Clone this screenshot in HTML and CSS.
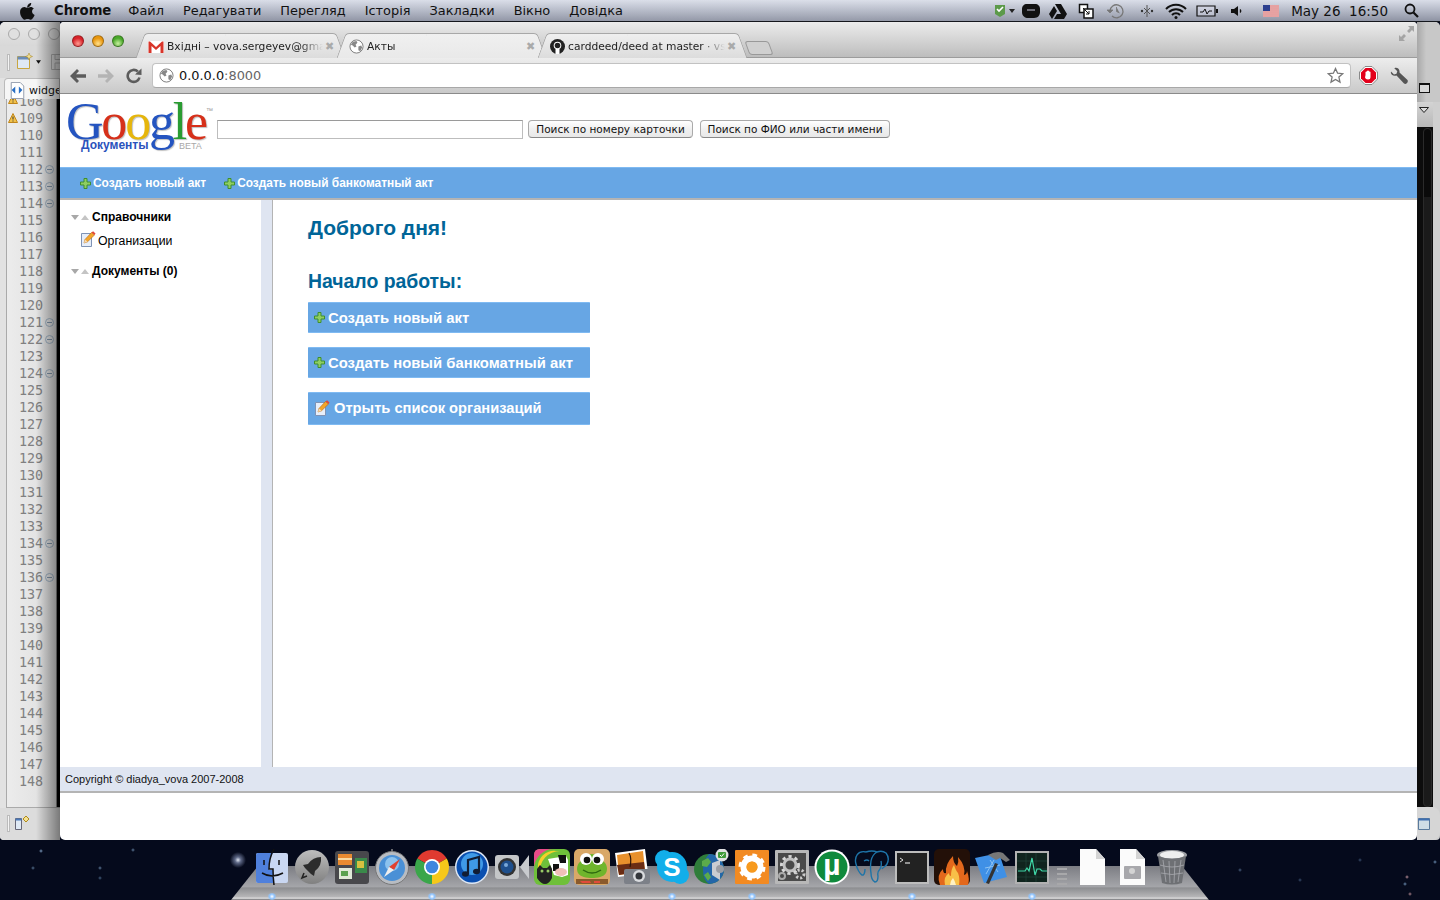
FILE: index.html
```html
<!DOCTYPE html>
<html lang="en">
<head>
    <meta charset="UTF-8">
    <meta name="viewport" content="width=device-width, initial-scale=1.0">
    <title>Акты</title>
    <link rel="stylesheet" href="styles.css">
</head>
<body>
    <!-- shared icons -->
    <svg class="defs">
        <symbol id="plus" viewBox="0 0 11 11"><path d="M4 .5h3V4h3.500v3H7v3.500H4V7H.5V4H4z" fill="#8fce62" stroke="#3f8f2c"/></symbol>
        <symbol id="pencil" viewBox="0 0 16 16"><path d="M1.500 2.500h10v13h-10z" fill="#e6eefa" stroke="#7f93b5"/><path d="M4 12l1-3.500L11.500 1.500l3 2.500-7 6.800z" fill="#f4a52a" stroke="#b86a10" stroke-width=".6"/><path d="M11.500 1.500l3 2.500 1-1.500-2.400-2.200z" fill="#e2483a"/><path d="M4 12l1-3.500 2.500 2.300z" fill="#f6dcb4"/></symbol>
        <symbol id="globe" viewBox="0 0 16 16"><circle cx="8" cy="8" r="7" fill="#fff" stroke="#777"/><path d="M4 3l4-1 1 2-2 2 1 2-2 1-2-2-2-1zM10 8l3-1 1 2-2 4-2-1z" fill="#888"/></symbol>
        <symbol id="twist" viewBox="0 0 18 5"><path d="M0 0h8L4 5z" fill="#a8a8a8"/><path d="M10 5h8L14 0z" fill="#c4c4c4"/></symbol>
        <symbol id="warning" viewBox="0 0 10 10"><path d="M5 .5L9.500 9.500H.5z" fill="#f2c24a" stroke="#c0861c" stroke-linejoin="round"/><path d="M5 3.500v3M5 7.500v1" stroke="#333"/></symbol>
    </svg>

    <div class="desktop">
        <header class="menubar">
            <svg class="apple" viewBox="0 0 15 18"><path d="M11.200 1c.1 1.200-.4 2.300-1.100 3.100-.7.800-1.800 1.400-2.900 1.300-.1-1.100.4-2.300 1.100-3C9 1.600 10.200 1 11.200 1zM14.600 13c-.4 1-.6 1.400-1.100 2.200-.7 1.100-1.700 2.500-3 2.500-1.100 0-1.400-.7-2.900-.7s-1.800.7-3 .7c-1.300 0-2.200-1.300-2.900-2.400C-.2 12.400-.4 8.900.8 7 1.700 5.700 3 4.900 4.300 4.900c1.300 0 2.200.8 3.200.8 1 0 1.600-.8 3.200-.8 1.100 0 2.300.6 3.200 1.700-2.800 1.500-2.300 5.500.7 6.400z" fill="#111"/></svg>
            <nav class="menu">
                <span class="menu-app">Chrome</span>
                <span>Файл</span>
                <span>Редагувати</span>
                <span>Перегляд</span>
                <span>Історія</span>
                <span>Закладки</span>
                <span>Вікно</span>
                <span>Довідка</span>
            </nav>
            <div class="tray">
                <svg class="tray-ico" width="22" height="16" viewBox="0 0 22 16"><path d="M1 2h10v9l-5 3-5-3z" fill="#5c9a4a"/><path d="M3 6l2 2 4-4" stroke="#fff" stroke-width="1.600" fill="none"/><path d="M15 6h6l-3 4z" fill="#222"/></svg>
                <svg class="tray-ico gap-6" width="18" height="16" viewBox="0 0 18 16"><path d="M5 1h8c3 0 5 2 5 5v3c0 3-2 6-6 6H6c-3 0-6-2-6-6V6c0-3 2-5 5-5z" fill="#111"/><path d="M5 7h8" stroke="#aab" stroke-width="1.200"/></svg>
                <svg class="tray-ico" width="18" height="16" viewBox="0 0 18 16"><path d="M6 1h6l6 10h-6zM5 3l3 5-5 8-3-5zM8 11h10l-3 5H5z" fill="#111"/></svg>
                <svg class="tray-ico gap-11" width="16" height="16" viewBox="0 0 16 16"><path d="M1.500 1.500h8v8h-8z" fill="#fff" stroke="#111" stroke-width="1.500"/><path d="M6 6h9v9H6z" fill="#fff" stroke="#111" stroke-width="1.500"/><path d="M5 5l6 6M8 11h3V8" stroke="#111" fill="none"/></svg>
                <svg class="tray-ico gap-13" width="18" height="16" viewBox="0 0 18 16"><path d="M3 8a6.500 6.500 0 1 1 2 5" fill="none" stroke="#777" stroke-width="1.300"/><path d="M0 7h6L3 10z M9.500 4v4.500l3 1.500" fill="#777" stroke="#777" stroke-width=".8"/></svg>
                <svg class="tray-ico gap-15" width="14" height="16" viewBox="0 0 14 16"><path d="M7 2v12M4 5l6 6M10 5l-6 6" stroke="#555" stroke-width="1" fill="none"/><circle cx="2" cy="8" r="1.200" fill="#333"/><circle cx="12" cy="8" r="1.200" fill="#333"/></svg>
                <svg class="tray-ico gap-11" width="22" height="16" viewBox="0 0 22 16"><path d="M1 6a14 14 0 0 1 20 0M4 9a10 10 0 0 1 14 0M7 12a5.500 5.500 0 0 1 8 0" stroke="#111" stroke-width="2" fill="none"/><circle cx="11" cy="14.500" r="1.500" fill="#111"/></svg>
                <svg class="tray-ico" width="22" height="14" viewBox="0 0 22 14"><path d="M1 2h18v10H1z" fill="#eef" fill-opacity=".3" stroke="#111" stroke-width="1.200"/><path d="M20 5h2v4h-2z" fill="#111"/><path d="M4 8h3l2-3 2 5 2-3h3" stroke="#111" fill="none"/></svg>
                <svg class="tray-ico gap-13" width="12" height="14" viewBox="0 0 12 14"><path d="M0 5h3l4-3v10L3 9H0z" fill="#111"/><path d="M9 5.500q1.500 1.500 0 3" stroke="#111" fill="none" stroke-width="1.200"/></svg>
                <svg class="tray-ico gap-20" width="16" height="12" viewBox="0 0 16 12"><path d="M0 0h16v12H0z" fill="#fff"/><path d="M0 1h16M0 3h16M0 5h16M0 7h16M0 9h16M0 11h16" stroke="#c44" stroke-width="1"/><path d="M0 0h7v6H0z" fill="#2c3f8f"/></svg>
                <span class="clock">May 26&nbsp; 16:50</span>
                <svg class="tray-ico" width="15" height="15" viewBox="0 0 15 15"><circle cx="6" cy="6" r="4.500" fill="none" stroke="#111" stroke-width="1.800"/><path d="M9.500 9.500l4.500 4.500" stroke="#111" stroke-width="2.200"/></svg>
            </div>
        </header>

        <!-- editor window behind the browser -->
        <div class="back-window">
            <div class="back-left">
                <div class="back-title">
                    <i class="dim-dot"></i><i class="dim-dot"></i><i class="dim-dot"></i>
                </div>
                <div class="back-tools">
                    <i class="grip"></i>
                    <svg width="18" height="18" viewBox="0 0 18 18"><path d="M1.500 3.500h12v12h-12z" fill="#dfe9f5" stroke="#c9a640"/><path d="M1.500 3.500h12v3h-12z" fill="#6a8cb8"/><path d="M13 0l1 2.500 2.500 1-2.500 1-1 2.500-1-2.500-2.500-1 2.500-1z" fill="#f4e090" stroke="#a08020" stroke-width=".5"/></svg>
                    <svg width="5" height="4" viewBox="0 0 7 5"><path d="M0 0h7L3.500 5z" fill="#111"/></svg>
                    <svg class="floppy" width="16" height="16" viewBox="0 0 16 16"><path d="M.5.5h15v15H.5zM4 .5v5h8v-5M4 15v-6h8v6" fill="none" stroke="#aaa"/></svg>
                </div>
                <div class="back-tab">
                    <svg width="17" height="17" viewBox="0 0 17 19"><path d="M1.500.5h10l4 4v14h-14z" fill="#fff" stroke="#8a94a6"/><path d="M6 5L2 9l4 4zM10 5l4 4-4 4z" fill="#2a6fc4"/></svg>
                    <span>widget.py</span>
                </div>
                <div class="gutter">
                    <div class="line">108<svg class="warn warn-cut"><use href="#warning"/></svg></div>
                    <div class="line">109<svg class="warn"><use href="#warning"/></svg></div>
                    <div class="line">110</div>
                    <div class="line">111</div>
                    <div class="line">112<i class="fold"></i></div>
                    <div class="line">113<i class="fold"></i></div>
                    <div class="line">114<i class="fold"></i></div>
                    <div class="line">115</div>
                    <div class="line">116</div>
                    <div class="line">117</div>
                    <div class="line">118</div>
                    <div class="line">119</div>
                    <div class="line">120</div>
                    <div class="line">121<i class="fold"></i></div>
                    <div class="line">122<i class="fold"></i></div>
                    <div class="line">123</div>
                    <div class="line">124<i class="fold"></i></div>
                    <div class="line">125</div>
                    <div class="line">126</div>
                    <div class="line">127</div>
                    <div class="line">128</div>
                    <div class="line">129</div>
                    <div class="line">130</div>
                    <div class="line">131</div>
                    <div class="line">132</div>
                    <div class="line">133</div>
                    <div class="line">134<i class="fold"></i></div>
                    <div class="line">135</div>
                    <div class="line">136<i class="fold"></i></div>
                    <div class="line">137</div>
                    <div class="line">138</div>
                    <div class="line">139</div>
                    <div class="line">140</div>
                    <div class="line">141</div>
                    <div class="line">142</div>
                    <div class="line">143</div>
                    <div class="line">144</div>
                    <div class="line">145</div>
                    <div class="line">146</div>
                    <div class="line">147</div>
                    <div class="line">148</div>
                </div>
                <div class="back-status">
                    <i class="grip"></i>
                    <svg width="16" height="16" viewBox="0 0 16 16"><path d="M.5 3.500h6v11h-6z" fill="#dfe9f5" stroke="#667"/><path d="M.5 3.500h6v2h-6z" fill="#4a78b8"/><path d="M11 1l3 3-3 3-3-3z" fill="#f4e090" stroke="#b08a18"/></svg>
                </div>
            </div>
            <div class="back-right">
                <div class="side-icon"><i class="restore"></i></div>
                <div class="side-drop"><svg width="10" height="6" viewBox="0 0 10 6"><path d="M.5.5h9L5 5.500z" fill="#ddd" stroke="#222"/></svg></div>
                <div class="side-dark"><i class="scroll-track"></i></div>
                <div class="side-bottom">
                    <svg width="12" height="12" viewBox="0 0 12 12"><path d="M.5.500h11v11H.5z" fill="#cfdde6" stroke="#5a7a9c"/><path d="M.5.500h11v2H.5z" fill="#3f6fb0"/></svg>
                </div>
            </div>
        </div>

        <!-- browser window -->
        <div class="browser">
            <div class="tabstrip">
                <div class="lights">
                    <i class="light light-red"></i><i class="light light-amber"></i><i class="light light-green"></i>
                </div>
                <div class="tabs">
                    <div class="tab">
                        <svg class="favicon" width="16" height="12" viewBox="0 0 16 12"><path d="M0 0h16v12H0z" fill="#fff"/><path d="M.5 12V.5h1.500L8 6l6-5.500h1.500V12h-3V5L8 9 3.500 5v7z" fill="#d8352a"/></svg>
                        <span class="tab-title">Вхідні – vova.sergeyev@gmail.com</span>
                        <span class="tab-close">✖</span>
                    </div>
                    <div class="tab tab-active">
                        <svg class="favicon" width="15" height="15"><use href="#globe"/></svg>
                        <span class="tab-title">Акты</span>
                        <span class="tab-close">✖</span>
                    </div>
                    <div class="tab">
                        <svg class="favicon" width="15" height="15" viewBox="0 0 15 15"><circle cx="7.500" cy="7.500" r="7.500" fill="#222"/><circle cx="7.500" cy="6.500" r="3.800" fill="#fff"/><path d="M5.500 10h4v5h-4z" fill="#fff"/><circle cx="7.500" cy="6.500" r="2.800" fill="#222"/></svg>
                        <span class="tab-title">carddeed/deed at master · vsergeyev</span>
                        <span class="tab-close">✖</span>
                    </div>
                    <div class="newtab"></div>
                </div>
                <svg class="fullscreen" width="15" height="15" viewBox="0 0 15 15"><path d="M9 0h6v6l-2-2-3 3-2-2 3-3zM6 15H0V9l2 2 3-3 2 2-3 3z" fill="#a4a4a4"/></svg>
            </div>

            <div class="toolbar">
                <svg class="tool" width="16" height="14" viewBox="0 0 16 14"><path d="M7 0l2 2-3 3.200h10v3.600H6L9 12l-2 2-7-7z" fill="#5c5c5c"/></svg>
                <svg class="tool" width="16" height="14" viewBox="0 0 16 14"><path d="M9 0L7 2l3 3.200H0v3.600h10L7 12l2 2 7-7z" fill="#b4b4b4"/></svg>
                <svg class="tool" width="16" height="16" viewBox="0 0 16 16"><path d="M13.500 9.500A6 6 0 1 1 11.800 3.500" fill="none" stroke="#5c5c5c" stroke-width="2.600"/><path d="M9 6.500L15.500 7V.5z" fill="#5c5c5c"/></svg>
                <div class="omnibox">
                    <svg width="15" height="15"><use href="#globe"/></svg>
                    <span class="url">0.0.0.0<span class="url-port">:8000</span></span>
                    <svg class="star" width="17" height="17" viewBox="0 0 17 17"><path d="M8.500 1.500l2.100 4.700 5.100.5-3.800 3.400 1.100 5-4.500-2.600-4.500 2.600 1.100-5L1.300 6.700l5.100-.5z" fill="#fff" stroke="#777" stroke-width="1.300"/></svg>
                </div>
                <svg class="tool-stop" width="19" height="19" viewBox="0 0 19 19"><path d="M6 .5h7L18.500 6v7L13 18.500H6L.5 13V6z" fill="#fff" stroke="#888"/><path d="M6.500 2h6L17 6.500v6L12.500 17h-6L2 12.500v-6z" fill="#e3001b"/><path d="M6.500 9V6q.7-1 1.200 0V5q.8-1 1.300 0q.8-1 1.300 0v1q.7-.8 1.200 0v5q0 2.500-2.500 2.500T6 11.500z" fill="#fff"/></svg>
                <svg class="tool-wrench" width="18" height="18" viewBox="0 0 18 18"><path d="M1 4.500L4 7.500l2.500-.8.800-2.500L4.300 1.200C7 0 10 2 9.500 5.500l8 7.500q.8 1.500-.5 3t-3 .5L6.500 8.500C3 9.500.2 7.500 1 4.500z" fill="#555"/></svg>
            </div>

            <div class="page">
                <div class="top">
                    <div class="logo">
                        <span class="logo-word"><b class="c-blue">G</b><b class="c-red">o</b><b class="c-yellow">o</b><b class="c-blue">g</b><b class="c-green">l</b><b class="c-red">e</b></span>
                        <span class="logo-tm">™</span>
                        <span class="logo-sub">Документы</span>
                        <span class="logo-beta">BETA</span>
                    </div>
                    <input class="search" type="text">
                    <button class="search-btn btn-card">Поиск по номеру карточки</button>
                    <button class="search-btn btn-name">Поиск по ФИО или части имени</button>
                </div>

                <div class="actions">
                    <a class="action"><svg width="11" height="11"><use href="#plus"/></svg>Создать новый акт</a>
                    <a class="action"><svg width="11" height="11"><use href="#plus"/></svg>Создать новый банкоматный акт</a>
                </div>

                <div class="columns">
                    <aside class="sidebar">
                        <div class="tree-head"><svg width="18" height="5"><use href="#twist"/></svg>Справочники</div>
                        <div class="tree-item"><svg width="16" height="16"><use href="#pencil"/></svg>Организации</div>
                        <div class="tree-head tree-head-2"><svg width="18" height="5"><use href="#twist"/></svg>Документы (0)</div>
                    </aside>
                    <div class="strip"></div>
                    <main class="main">
                        <h1>Доброго дня!</h1>
                        <h2>Начало работы:</h2>
                        <a class="big-btn"><svg width="11" height="11"><use href="#plus"/></svg>Создать новый акт</a>
                        <a class="big-btn"><svg width="11" height="11"><use href="#plus"/></svg>Создать новый банкоматный акт</a>
                        <a class="big-btn big-btn-tall"><svg width="16" height="16"><use href="#pencil"/></svg>Отрыть список организаций</a>
                    </main>
                </div>

                <footer class="footer">Copyright © diadya_vova 2007-2008</footer>
                <div class="page-end"></div>
            </div>
        </div>

        <!-- dock -->
        <div class="dock">
            <svg class="dock-ico" viewBox="0 0 36 36"><rect x="2" y="4" width="32" height="30" rx="2" fill="#c9d7f2"/><path d="M4 4h15q-5 8-4 17h4v13H4q-2 0-2-2V6q0-2 2-2z" fill="#4f80dc"/><path d="M20 0q-5 9-5 20h4q0 8 1 16M8 24q10 6 21 0M10 11v5M25 11v5" fill="none" stroke="#111" stroke-width="1.500"/></svg>
            <svg class="dock-ico" viewBox="0 0 36 36"><defs><linearGradient id="silver" x1="0" y1="0" x2="0" y2="1"><stop offset="0" stop-color="#bdbdbd"/><stop offset="1" stop-color="#808080"/></linearGradient></defs><circle cx="18" cy="18" r="17" fill="url(#silver)"/><path d="M27 8q-8 0-13 7l-5 1 2 3 6 6 3 2 1-5q7-5 6-14z" fill="#2c2c2c"/><path d="M10 24l-2 5 5-2" fill="none" stroke="#222" stroke-width="1.500"/></svg>
            <svg class="dock-ico" viewBox="0 0 36 36"><rect x="1" y="2" width="34" height="33" rx="3" fill="#48484c"/><rect x="4" y="5" width="14" height="11" fill="#e88a30"/><rect x="4" y="9" width="14" height="2" fill="#f8d8a0"/><rect x="5" y="19" width="13" height="11" fill="#dfe8d8"/><rect x="7" y="22" width="7" height="5" fill="#5aa050"/><rect x="21" y="9" width="12" height="15" fill="#3a8a4a"/><rect x="23" y="12" width="7" height="7" fill="#d8c040"/></svg>
            <svg class="dock-ico" viewBox="0 0 36 36"><circle cx="18" cy="19" r="16.500" fill="#b8bcc2" stroke="#777"/><circle cx="18" cy="19" r="13" fill="#4a90d6"/><circle cx="18" cy="15" r="7" fill="#8cc2ee"/><path d="M26 10l-6 11-5-3z" fill="#e04030"/><path d="M10 28l5-10 5 3z" fill="#eee"/><path d="M18 0v3" stroke="#888" stroke-width="1.500"/></svg>
            <svg class="dock-ico" viewBox="0 0 36 36"><path d="M18 18L3.300 9.500A17 17 0 0 1 32.700 9.500Z" fill="#e03a30"/><path d="M18 18L32.700 9.500A17 17 0 0 1 18 35Z" fill="#f6c81a"/><path d="M18 18L18 35A17 17 0 0 1 3.300 9.500Z" fill="#3aa64a"/><circle cx="18" cy="18" r="8" fill="#fff"/><circle cx="18" cy="18" r="6.300" fill="#3f86de"/></svg>
            <svg class="dock-ico" viewBox="0 0 36 36"><circle cx="18" cy="18" r="17" fill="#dfe8f5"/><circle cx="18" cy="18" r="15.500" fill="#0a4fb0"/><circle cx="18" cy="15" r="11" fill="#3f9ae8"/><path d="M14 25V11l11-3v14" fill="none" stroke="#111c33" stroke-width="2.200"/><ellipse cx="11.500" cy="25" rx="3.500" ry="2.800" fill="#111c33"/><ellipse cx="22.500" cy="22.500" rx="3.500" ry="2.800" fill="#111c33"/></svg>
            <svg class="dock-ico" viewBox="0 0 36 36"><rect x="1" y="6" width="24" height="24" rx="3" fill="#c4c6c8"/><circle cx="13" cy="18" r="9" fill="#333"/><circle cx="13" cy="18" r="6.500" fill="#1e4f8c"/><circle cx="12" cy="16" r="2" fill="#7aa8d8"/><path d="M35 6v24L26 18z" fill="#c8cace"/></svg>
            <svg class="dock-ico" viewBox="0 0 36 36"><rect x="0" y="0" width="36" height="36" rx="6" fill="#6fc03a"/><path d="M0 18A20 20 0 0 1 20 0h-14q-6 0-6 6z" fill="#e84a8a"/><path d="M4 20A16 16 0 0 1 22 2l4 0A20 20 0 0 0 6 24z" fill="#f6d02a"/><path d="M14 10l18-3 2 4v15l-6 2-8-2z" fill="#fff"/><path d="M24 6h8v8h-6zM19 15h6v7h-6z" fill="#111"/><ellipse cx="27" cy="23" rx="6" ry="4" fill="#f0c0b8"/><path d="M3 20l3-4 3 3h4l3-3 2 4v9q-3 6-7 6t-8-6z" fill="#222"/><circle cx="8" cy="22" r="1.500" fill="#9c6"/><circle cx="14" cy="22" r="1.500" fill="#9c6"/></svg>
            <svg class="dock-ico" viewBox="0 0 36 36"><rect x="0" y="0" width="36" height="36" rx="5" fill="#d9a868"/><rect x="2" y="30" width="32" height="5" fill="#8a5a2c"/><path d="M18 5c-6 0-7 4-11 7s-5 8-3 12 9 5 14 5 12-1 14-5 1-9-3-12-5-7-11-7z" fill="#6fb52c"/><circle cx="12" cy="10" r="6" fill="#fff"/><circle cx="24" cy="10" r="6" fill="#fff"/><circle cx="13" cy="11" r="3.300" fill="#111"/><circle cx="23" cy="11" r="3.300" fill="#111"/><path d="M9 21q9 6 18 0" fill="none" stroke="#2e6a10" stroke-width="1.500"/><path d="M6 32h10l1 2H8zM20 32h6v2h-6z" fill="#e24a3a"/></svg>
            <svg class="dock-ico" viewBox="0 0 36 36"><path d="M1 4L31 0l3 24-30 4z" fill="#fff"/><path d="M3 6l26-4 2 20-26 4z" fill="#e8902c"/><path d="M3 16l27-3 1 9-26 4z" fill="#6a2c14"/><path d="M15 4q3 5 1 14" stroke="#2c1408" stroke-width="1.200" fill="none"/><rect x="10" y="20" width="26" height="15" rx="2" fill="#7c8088"/><circle cx="25" cy="27" r="6" fill="#d8dade"/><circle cx="25" cy="27" r="3.500" fill="#33363c"/></svg>
            <svg class="dock-ico" viewBox="0 0 36 36"><circle cx="10" cy="10" r="9" fill="#12aeea"/><circle cx="26" cy="26" r="9" fill="#12aeea"/><circle cx="18" cy="18" r="15" fill="#12aeea"/><text class="skype-s" x="18" y="27" text-anchor="middle">S</text></svg>
            <svg class="dock-ico" viewBox="0 0 36 36"><circle cx="15" cy="20" r="15" fill="#2f7d3a"/><path d="M15 5a15 15 0 0 1 0 30q-6-4-6-14T15 5z" fill="#2366a8"/><path d="M8 12l6-3 3 4-4 5-5-1zM10 26l4-3 3 5-3 4z" fill="#5cab4a"/><path d="M18 14l8-3v20l-8-5z" fill="#c9ccd1"/><circle cx="26" cy="20" r="4" fill="#9a9da4"/><circle cx="28" cy="6" r="6.500" fill="#dfe0e2"/><rect x="24" y="3" width="8" height="6" rx="1" fill="#3f9a3a"/><path d="M26 6l1.500 1.500 2.500-3" stroke="#fff" fill="none"/></svg>
            <svg class="dock-ico" viewBox="0 0 36 36"><rect x="1" y="1" width="34" height="34" rx="1" fill="#f28a22"/><circle cx="18" cy="18" r="11" fill="none" stroke="#fff" stroke-width="5" stroke-dasharray="4.300 4.340"/><circle cx="18" cy="18" r="8.500" fill="none" stroke="#fff" stroke-width="6"/><circle cx="18" cy="18" r="5.500" fill="#f79a1e"/></svg>
            <svg class="dock-ico" viewBox="0 0 36 36"><rect x="1" y="1" width="34" height="34" rx="1" fill="#b8b8b8"/><rect x="4" y="4" width="28" height="28" fill="#4a4a4a"/><circle cx="16" cy="16" r="8" fill="none" stroke="#d8d8d8" stroke-width="4" stroke-dasharray="3 3"/><circle cx="16" cy="16" r="6" fill="none" stroke="#c0c0c0" stroke-width="3"/><circle cx="26" cy="25" r="4" fill="none" stroke="#ccc" stroke-width="3" stroke-dasharray="2 2"/><circle cx="8" cy="27" r="3" fill="none" stroke="#aaa" stroke-width="2"/></svg>
            <svg class="dock-ico" viewBox="0 0 36 36"><circle cx="18" cy="18" r="17.500" fill="#fff"/><circle cx="18" cy="18" r="15.500" fill="#0f8a3c"/><text class="torrent-u" x="18" y="26" text-anchor="middle">µ</text></svg>
            <svg class="dock-ico" viewBox="0 0 36 36"><path d="M12 3C4 1 0 8 2 15c1 5 4 10 6 11s3-3 3-6M12 3q6-2 11 0 5-2 9 1 4 5 1 11c-2 3-4 3-5 5M23 3q-5 3-6 9-1 7 0 12 0 7 4 9 3 0 3-6-1-4 2-7 2-3 1-8M10 12q3-2 5 0" fill="none" stroke="#1e74a8" stroke-width="1.400"/></svg>
            <svg class="dock-ico" viewBox="0 0 36 36"><rect x="1" y="2" width="34" height="33" fill="#bdbdbd"/><rect x="3" y="4" width="30" height="29" fill="#222"/><path d="M6 9l3 2-3 2" fill="none" stroke="#ddd"/><path d="M11 14h5" stroke="#ddd" stroke-width="1.200"/></svg>
            <svg class="dock-ico" viewBox="0 0 36 36"><rect x="0" y="0" width="36" height="36" rx="5" fill="#231008"/><path d="M6 36q-4-10 3-16 0 5 3 4-1-9 7-17 0 7 4 10 2-4 1-9 8 9 6 18 3-1 3-4 3 8 1 14z" fill="#e3681c"/><path d="M11 36q-2-8 4-12 0 3 2 3 0-7 3-11 2 6 4 8 2 5 1 12z" fill="#f8c048"/><path d="M16 36q0-4 3-7 2 3 3 7z" fill="#fff2c4"/></svg>
            <svg class="dock-ico" viewBox="0 0 36 36"><path d="M1 9l24-5 8 24-23 6z" fill="#3f90e6"/><path d="M12 25l8-14M16 11l8 12M11 19l15-3" stroke="#8cc2f2" fill="none"/><path d="M21 14l-9 20 3 1 9-20z" fill="#333"/><path d="M14 6q9-5 15-2l7 7-4 2-6-4-4 2z" fill="#777"/></svg>
            <svg class="dock-ico" viewBox="0 0 36 36"><rect x="1" y="2" width="34" height="33" fill="#b2b2b2"/><rect x="3" y="4" width="30" height="29" fill="#10241e"/><path d="M3 12h30M3 20h30M3 28h30M12 4v29M22 4v29" stroke="#20443a" stroke-width=".7"/><path d="M4 22h7l2-3 2 3 3-13 3 17 2-6h3l2 2h5" fill="none" stroke="#3fd8a8" stroke-width="1.200"/></svg>
            <div class="dock-sep"></div>
            <svg class="dock-ico" viewBox="0 0 36 36"><path d="M6 0h16l9 10v26H6z" fill="#fbfbfb"/><path d="M22 0v10h9z" fill="#d4d4d4"/></svg>
            <svg class="dock-ico" viewBox="0 0 36 36"><path d="M6 0h16l9 10v26H6z" fill="#fbfbfb"/><path d="M22 0v10h9z" fill="#d4d4d4"/><rect x="10" y="17" width="17" height="13" rx="1" fill="#a8a8ac"/><circle cx="18" cy="22" r="3" fill="#d4d4d4"/></svg>
            <svg class="dock-ico" viewBox="0 0 36 36"><ellipse cx="18" cy="6" rx="15" ry="5" fill="#9ea0a4"/><ellipse cx="18" cy="6" rx="12" ry="4" fill="#eee"/><path d="M4 7l4 27q10 3 20 0l4-27q-14 5-28 0z" fill="#6e7074"/><path d="M9 11l3 22M15 12l1 22M21 12l-1 22M27 11l-3 22M6 16q12 4 24 0M7 24q11 3 22 0" stroke="#a8aaae" fill="none" stroke-width=".8"/></svg>
            <i class="run run-1"></i><i class="run run-2"></i><i class="run run-3"></i><i class="run run-4"></i><i class="run run-5"></i><i class="run run-6"></i>
        </div>
    </div>
</body>
</html>
```

FILE: styles.css
```css
* {
    box-sizing: border-box;
}
html, body {
    margin: 0;
    height: 100%;
}
body {
    font-family: "Liberation Sans", Arial, sans-serif;
    overflow: hidden;
}
.defs {
    position: absolute;
    width: 0;
    height: 0;
}
svg {
    display: block;
    flex: none;
}
.desktop {
    position: relative;
    width: 1440px;
    height: 900px;
    overflow: hidden;
    background-color: #050a1c;
    background-image:
        radial-gradient(circle at 238px 860px, #dfe5f0 0, #5d6785 3px, transparent 8px),
        radial-gradient(circle at 41px 851px, #7d9cc0 0, transparent 2px),
        radial-gradient(circle at 33px 868px, #55708f 0, transparent 2px),
        radial-gradient(circle at 100px 868px, #5f7a9a 0, transparent 2px),
        radial-gradient(circle at 133px 850px, #5f7a9a 0, transparent 2px),
        radial-gradient(circle at 100px 878px, #45607f 0, transparent 2px),
        radial-gradient(circle at 1407px 877px, #b98e98 0, transparent 2px),
        radial-gradient(circle at 1410px 894px, #a88088 0, transparent 2px),
        radial-gradient(circle at 1405px 884px, #6a8cb0 0, transparent 2px),
        radial-gradient(circle at 1435px 862px, #6a8cb0 0, transparent 2px),
        radial-gradient(circle at 1240px 870px, #4a607f 0, transparent 2px),
        radial-gradient(circle at 1300px 880px, #3a4f6f 0, transparent 2px),
        radial-gradient(circle at 1360px 860px, #3a4f6f 0, transparent 2px);
}

/* mac menu bar */
.menubar {
    position: absolute;
    top: 0;
    left: 0;
    width: 1440px;
    height: 22px;
    display: flex;
    align-items: center;
    padding-left: 20px;
    font-family: "DejaVu Sans", sans-serif;
    font-size: 12.900px;
    color: #111;
    background: linear-gradient(90deg, transparent 0, rgba(255,255,255,.06) 60%, transparent 100%), linear-gradient(#d9dde8, #b0b5c3 55%, #8e93a3);
    border-bottom: 1px solid #15171d;
}
.apple {
    width: 15px;
    height: 18px;
}
.menu {
    display: flex;
    gap: 19px;
    margin-left: 19px;
}
.menu-app {
    font-weight: bold;
    font-size: 13.200px;
    margin-right: -2px;
}
.tray {
    display: flex;
    align-items: center;
    margin-left: auto;
    padding-right: 21px;
}
.tray-ico {
    margin-left: 9px;
}
.gap-6 {
    margin-left: 6px;
}
.gap-11 {
    margin-left: 11px;
}
.gap-13 {
    margin-left: 13px;
}
.gap-15 {
    margin-left: 15px;
}
.gap-20 {
    margin-left: 20px;
}
.clock {
    margin: 0 7px 0 12px;
    font-size: 13.500px;
}

/* editor behind */
.back-window {
    position: absolute;
    left: 0;
    top: 22px;
    width: 1440px;
    height: 818px;
    display: flex;
    justify-content: space-between;
    border-radius: 5px 5px 4px 4px;
    overflow: hidden;
}
.back-left {
    position: relative;
    width: 60px;
    display: flex;
    flex-direction: column;
    background: #e2e2e2;
}
.back-left::after {
    content: "";
    position: absolute;
    inset: 0;
    background: linear-gradient(90deg, transparent 60%, rgba(0,0,0,.45) 100%);
}
.back-title {
    height: 24px;
    display: flex;
    gap: 8px;
    align-items: center;
    padding-left: 8px;
    background: linear-gradient(#e8e8e8, #d8d8d8);
    flex: none;
}
.dim-dot {
    width: 12px;
    height: 12px;
    flex: none;
    border-radius: 50%;
    border: 1px solid #aaa;
    background: #e0e0e0;
}
.back-tools {
    height: 32px;
    display: flex;
    align-items: center;
    gap: 2px;
    padding-left: 7px;
    background: #d9d9d9;
    flex: none;
}
.grip {
    width: 3px;
    height: 17px;
    margin-right: 4px;
    flex: none;
    border: 1px solid #bbb;
    background: #f4f4f4;
}
.floppy {
    margin-left: 8px;
}
.back-tab {
    height: 21px;
    margin-left: 4px;
    display: flex;
    align-items: center;
    gap: 3px;
    padding: 3px 0 0 4px;
    font-family: "DejaVu Sans", sans-serif;
    font-size: 11px;
    color: #111;
    white-space: nowrap;
    overflow: hidden;
    background: #f6f6f6;
    border: 1px solid #bbb;
    border-bottom: none;
    border-radius: 4px 0 0 0;
    flex: none;
}
.gutter {
    height: 709px;
    margin-left: 6px;
    padding-left: 12px;
    overflow: hidden;
    background: linear-gradient(90deg, #ececec 0, #dedede 93%, #000 94%);
    border-left: 1px solid #aaa;
    border-bottom: 1px solid #aaa;
    font-family: "DejaVu Sans Mono", monospace;
    font-size: 13.400px;
    line-height: 17px;
    color: #808080;
    flex: none;
}
.line {
    position: relative;
    height: 17px;
    display: flex;
    align-items: center;
    top: -6px;
}
.warn {
    position: absolute;
    left: -11px;
    top: 3px;
    width: 10px;
    height: 10px;
}
.warn-cut {
    top: 1px;
}
.fold {
    width: 9px;
    height: 9px;
    margin-left: 2px;
    border-radius: 50%;
    border: 1px solid #9db0c2;
    background: linear-gradient(#7f93a8, #7f93a8) center / 5px 1px no-repeat;
}
.back-status {
    flex: 1;
    display: flex;
    align-items: center;
    padding-left: 7px;
    padding-bottom: 2px;
    gap: 1px;
    background: #dcdcdc;
}
.back-right {
    width: 23px;
    display: flex;
    flex-direction: column;
    background: #cfcfcf;
}
.side-icon {
    height: 80px;
    padding: 61px 0 0 2px;
    flex: none;
    background: linear-gradient(90deg, #a8a8a8, #c8c8c8 40%);
}
.restore {
    display: block;
    width: 11px;
    height: 10px;
    border: 1px solid #111;
    border-top-width: 2px;
    background: #d8d8d8;
}
.side-drop {
    height: 25px;
    width: 16px;
    display: flex;
    justify-content: center;
    padding-top: 5px;
    background: linear-gradient(#d4d4d4, #b8b8b8);
    flex: none;
}
.side-drop svg {
    margin-left: -2px;
}
.side-dark {
    width: 16px;
    height: 680px;
    background: #0c0c0c;
    padding: 1px 1px 0 6px;
    flex: none;
}
.scroll-track {
    display: block;
    height: 100%;
    border: 1px solid #2a2a2a;
    border-radius: 4px;
    background: linear-gradient(#0a0a0a 10%, #1a1a1a 10%);
}
.side-bottom {
    flex: 1;
    padding: 11px 0 0 1px;
    background: #d6d6d6;
    border-radius: 0 8px 8px 0;
}

/* browser */
.browser {
    position: absolute;
    left: 60px;
    top: 22px;
    width: 1357px;
    height: 818px;
    display: flex;
    flex-direction: column;
    border-radius: 4px 4px 5px 5px;
    overflow: hidden;
    background: #fff;
}
.tabstrip {
    height: 36px;
    display: flex;
    flex: none;
    position: relative;
    background: linear-gradient(#ececec, #bdbdbd);
    border-bottom: 1px solid #9c9c9c;
}
.lights {
    display: flex;
    gap: 8px;
    padding: 13px 0 0 12px;
    width: 80px;
    flex: none;
}
.light {
    width: 12px;
    height: 12px;
    border-radius: 50%;
    border: 1px solid rgba(0,0,0,.3);
}
.light-red {
    background: radial-gradient(circle at 50% 75%, #ff9a90, #d8232a 60%);
}
.light-amber {
    background: radial-gradient(circle at 50% 75%, #ffe08a, #e8960e 60%);
}
.light-green {
    background: radial-gradient(circle at 50% 75%, #c8f0a0, #4aa82a 60%);
}
.tabs {
    display: flex;
    align-items: flex-end;
}
.tab {
    position: relative;
    width: 201px;
    height: 25px;
    margin-bottom: -1px;
    display: flex;
    align-items: center;
    padding: 2px 4px 0 8px;
    font-family: "DejaVu Sans", sans-serif;
    font-size: 10.700px;
    color: #222;
}
.tab::before, .tab::after {
    content: "";
    position: absolute;
    top: 0;
    bottom: 0;
    width: 55%;
    background: linear-gradient(#efefef, #dcdcdc);
    border-top: 1px solid #a8a8a8;
    z-index: 0;
}
.tab::before {
    left: 0;
    border-left: 1px solid #a8a8a8;
    border-radius: 4px 0 0 0;
    transform: skewX(-20deg);
}
.tab::after {
    right: 0;
    border-right: 1px solid #a8a8a8;
    border-radius: 0 4px 0 0;
    transform: skewX(20deg);
}
.tab-active::before, .tab-active::after {
    background: linear-gradient(#f0f0f0, #e9e9e9);
}
.tab > * {
    position: relative;
    z-index: 1;
}
.favicon {
    margin-right: 3px;
}
.tab-title {
    flex: 1;
    overflow: hidden;
    white-space: nowrap;
    -webkit-mask-image: linear-gradient(90deg, #000 85%, transparent);
    mask-image: linear-gradient(90deg, #000 85%, transparent);
}
.tab-close {
    width: 12px;
    margin-left: 2px;
    font-size: 11px;
    color: #aaa;
}
.newtab {
    width: 24px;
    height: 14px;
    margin: 0 0 2px 4px;
    transform: skewX(20deg);
    background: #d0d0d0;
    border: 1px solid #999;
    border-radius: 3px;
}
.fullscreen {
    position: absolute;
    right: 3px;
    top: 4px;
}
.toolbar {
    height: 36px;
    display: flex;
    align-items: center;
    padding: 0 0 0 10px;
    flex: none;
    background: linear-gradient(#ededed, #c9c9c9);
    border-bottom: 1px solid #8a8a8a;
}
.tool {
    margin-right: 12px;
}
.omnibox {
    width: 1199px;
    height: 25px;
    margin-left: -2px;
    display: flex;
    align-items: center;
    padding: 0 6px;
    background: #fff;
    border: 1px solid #c2c2c2;
    border-bottom-color: #a8a8a8;
    border-radius: 4px;
    flex: none;
}
.url {
    margin-left: 5px;
    font-family: "DejaVu Sans", sans-serif;
    font-size: 12.900px;
    color: #111;
}
.url-port {
    color: #666;
}
.star {
    margin-left: auto;
}
.tool-stop {
    margin-left: 8px;
}
.tool-wrench {
    margin-left: 12px;
}

/* page */
.page {
    flex: 1;
    display: flex;
    flex-direction: column;
    min-height: 0;
    color: #000;
    font-size: 12px;
}
.top {
    height: 73px;
    display: flex;
    align-items: flex-start;
    padding: 26px 0 0 157px;
    position: relative;
    flex: none;
}
.logo {
    position: absolute;
    left: 6px;
    top: 0;
    width: 150px;
    height: 70px;
}
.logo-word {
    display: block;
    font-family: "Liberation Serif", serif;
    font-size: 52px;
    line-height: 56px;
    letter-spacing: -2.200px;
    text-shadow: 1px 1px 1px rgba(0,0,0,.25);
}
.logo-word b {
    font-weight: normal;
}
.c-blue {
    color: #2454c0;
}
.c-red {
    color: #d6301a;
}
.c-yellow {
    color: #e6b60c;
}
.c-green {
    color: #2a9c32;
}
.logo-tm {
    position: absolute;
    left: 140px;
    top: 13px;
    font-size: 7px;
    color: #999;
}
.logo-sub {
    position: absolute;
    left: 15px;
    top: 44px;
    font-size: 12px;
    font-weight: bold;
    color: #2a52bc;
}
.logo-beta {
    position: absolute;
    left: 113px;
    top: 47px;
    font-size: 9px;
    color: #a8a8a8;
}
.search {
    width: 306px;
    height: 19px;
    margin: 0;
    padding: 0;
    background: #fff;
    border: 1px solid #bdbdbd;
    border-top-color: #9a9a9a;
}
.search-btn {
    height: 18px;
    margin: 0;
    padding: 0;
    font-family: "DejaVu Sans", sans-serif;
    font-size: 10.500px;
    color: #111;
    background: linear-gradient(#fff, #f0f0f0 50%, #e8e8e8);
    border: 1px solid #aaa;
    border-bottom-color: #888;
    border-radius: 4px;
}
.btn-card {
    width: 165px;
    margin-left: 5px;
}
.btn-name {
    width: 190px;
    margin-left: 7px;
}
.actions {
    height: 33px;
    display: flex;
    align-items: center;
    gap: 18px;
    padding-left: 20px;
    flex: none;
    font-size: 11.900px;
    background: #67a6e4;
    border-top: 1px solid #7fbaf2;
    border-bottom: 2px solid #b4b4b4;
}
.action {
    display: flex;
    align-items: center;
    gap: 2px;
    font-weight: bold;
    color: #fff;
}
.columns {
    flex: 1;
    display: flex;
    min-height: 0;
}
.sidebar {
    width: 201px;
    padding: 9px 0 0 11px;
    flex: none;
}
.tree-head {
    display: flex;
    align-items: center;
    gap: 3px;
    height: 16px;
    font-weight: bold;
}
.tree-head-2 {
    margin-top: 16px;
}
.tree-item {
    display: flex;
    gap: 2px;
    height: 16px;
    margin: 6px 0 0 9px;
    font-size: 12.300px;
    line-height: 20px;
}
.strip {
    width: 11px;
    flex: none;
    background: #dfe5f1;
}
.main {
    flex: 1;
    padding: 16px 0 0 35px;
    border-left: 1px solid #b4b4b4;
}
.main h1 {
    margin: 0;
    font-size: 21px;
    line-height: 24px;
    color: #006598;
}
.main h2 {
    margin: 30px 0 10px;
    font-size: 19.400px;
    line-height: 22px;
    color: #006598;
}
.big-btn {
    width: 282px;
    height: 31px;
    margin-bottom: 14px;
    display: flex;
    align-items: center;
    gap: 3px;
    padding-left: 6px;
    font-size: 14.850px;
    font-weight: bold;
    color: #fff;
    background: #67a6e4;
    border-top: 1px solid #7fbaf2;
    border-bottom: 1px solid #7fbaf2;
    border-radius: 1px;
}
.big-btn-tall {
    height: 33px;
    gap: 4px;
    padding-bottom: 1px;
    font-size: 14.700px;
}
.footer {
    height: 26px;
    padding-left: 5px;
    font-size: 11px;
    line-height: 24px;
    color: #111;
    background: #dfe5f1;
    border-bottom: 2px solid #b4b4b4;
    flex: none;
}
.page-end {
    height: 47px;
    flex: none;
}

/* dock */
.dock {
    position: absolute;
    left: 254px;
    top: 849px;
    height: 51px;
    display: flex;
    align-items: flex-start;
    gap: 4px;
}
.dock::before {
    content: "";
    position: absolute;
    left: -23px;
    top: 17px;
    width: 978px;
    height: 34px;
    clip-path: polygon(27px 0, 951px 0, 978px 34px, 0 34px);
    background: linear-gradient(#7c7d83 0, #a5a6aa 62%, #8c8d90 64%, #b8b8ba 92%, #f0f0f0 94%, #6a6a6e 100%);
}
.dock-ico {
    position: relative;
    width: 36px;
    height: 36px;
}
.dock-sep {
    position: relative;
    width: 16px;
    height: 36px;
    background: repeating-linear-gradient(#a8a8aa 0 2px, transparent 2px 5px) center 19px / 10px 17px no-repeat;
}
.skype-s {
    font-family: "Liberation Sans", sans-serif;
    font-size: 26px;
    font-weight: bold;
    fill: #fff;
}
.torrent-u {
    font-family: "Liberation Sans", sans-serif;
    font-size: 30px;
    font-weight: bold;
    fill: #fff;
}
.run {
    position: absolute;
    top: 44px;
    width: 10px;
    height: 7px;
    border-radius: 50%;
    background: radial-gradient(circle, #fff 0, #8fc4ff 40%, transparent 75%);
}
.run-1 {
    left: 13px;
}
.run-2 {
    left: 173px;
}
.run-3 {
    left: 413px;
}
.run-4 {
    left: 493px;
}
.run-5 {
    left: 653px;
}
.run-6 {
    left: 773px;
}
```
